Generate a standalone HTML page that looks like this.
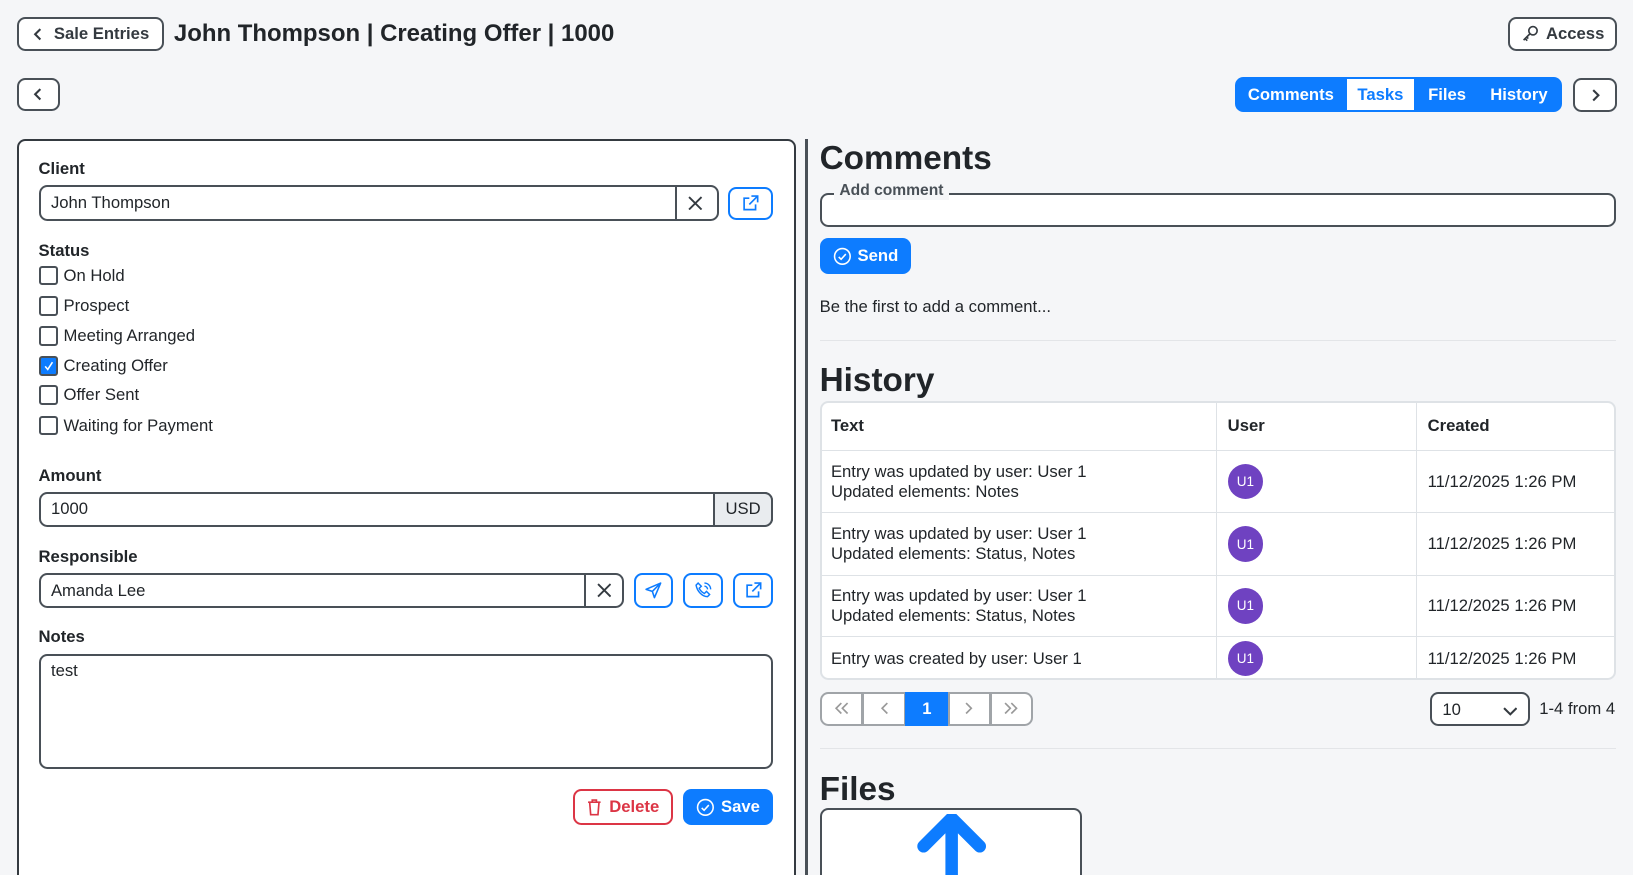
<!DOCTYPE html>
<html><head><meta charset="utf-8"><style>
html{zoom:1.04145;overflow:hidden;height:840px}
body{margin:0;width:1568px;height:840px;background:#f5f6f8;font-family:"Liberation Sans",sans-serif;color:#212529;position:relative;overflow:hidden;font-size:16px}
.a{position:absolute;box-sizing:border-box}
.btn{position:absolute;box-sizing:border-box;border:2px solid #495057;border-radius:8px;background:#fff;display:flex;align-items:center;justify-content:center;font-weight:bold;color:#343a40}
.bb{position:absolute;box-sizing:border-box;border:2px solid #0d7cff;border-radius:8px;background:#fff;display:flex;align-items:center;justify-content:center}
.lbl{position:absolute;font-weight:bold;font-size:16px}
.inp{position:absolute;box-sizing:border-box;border:2px solid #495057;border-radius:8px;background:#fff;padding-left:10px;display:flex;align-items:center}
.cb{position:absolute;left:37px;font-size:16px;display:flex;align-items:center}
.cb i{display:inline-block;width:19px;height:19px;border:2px solid #495057;border-radius:3px;margin-right:5px;box-sizing:border-box}
h2{position:absolute;margin:0;font-size:32px;font-weight:bold;left:787px}
td,th{border:1px solid #dee2e6;text-align:left;padding:0 10px;font-size:16px}
th{height:46px}
.av{width:34px;height:34px;border-radius:50%;background:#6f42c1;color:#fff;font-size:13px;display:flex;align-items:center;justify-content:center}
.pg{position:absolute;top:664px;height:33px;box-sizing:border-box;background:#fff;border:2px solid #a0a4a8;display:flex;align-items:center;justify-content:center;color:#999;font-size:18px}
</style></head><body>
<div class="btn" style="left:16px;top:16px;width:141px;height:33px;font-size:16px"><svg width="14" height="14" viewBox="0 0 14 14" style="margin-right:8px"><path d="M9 2L4 7l5 5" stroke="#343a40" stroke-width="2" fill="none"/></svg>Sale Entries</div>
<div class="a" style="left:167px;top:19px;font-size:23px;font-weight:bold">John Thompson | Creating Offer | 1000</div>
<div class="btn" style="left:1448px;top:16px;width:105px;height:33px"><svg width="18" height="18" viewBox="0 0 18 18" style="margin-right:6px"><circle cx="11.5" cy="6.5" r="4" stroke="#343a40" stroke-width="1.6" fill="none"/><path d="M8.5 9.5L2.5 15.5M4 14l2 2M5.5 12.5l1.5 1.5" stroke="#343a40" stroke-width="1.6" fill="none"/></svg>Access</div>
<div class="btn" style="left:16px;top:75px;width:42px;height:32px"><svg width="14" height="14"><path d="M9 2L4 7l5 5" stroke="#343a40" stroke-width="2" fill="none"/></svg></div>
<div class="a" style="left:1186px;top:74px;width:314px;height:34px;background:#0d7cff;border-radius:8px;color:#fff;font-weight:bold;display:flex;align-items:center">
<span style="width:107px;text-align:center">Comments</span><span style="width:65px;height:30px;background:#fff;color:#0d7cff;display:flex;align-items:center;justify-content:center">Tasks</span><span style="width:63px;text-align:center">Files</span><span style="width:75px;text-align:center">History</span></div>
<div class="btn" style="left:1510px;top:75px;width:43px;height:33px"><svg width="14" height="14"><path d="M5 2l5 5-5 5" stroke="#343a40" stroke-width="2" fill="none"/></svg></div>

<div class="a" style="left:16px;top:133px;width:748px;height:707px;background:#fff;border:2px solid #343a40;border-bottom:none;border-radius:8px 8px 0 0"></div>
<div class="a" style="left:773px;top:133px;width:3px;height:707px;background:#495057"></div>

<div class="lbl" style="left:37px;top:153px">Client</div>
<div class="inp" style="left:37px;top:178px;width:653px;height:34px">John Thompson</div>
<div class="a" style="left:648px;top:178px;width:2px;height:34px;background:#495057"></div>
<svg class="a" style="left:661px;top:188px" width="14" height="14"><path d="M1 1l12 12M13 1L1 13" stroke="#343a40" stroke-width="1.8"/></svg>
<div class="bb" style="left:699px;top:180px;width:43px;height:31px"><svg width="18" height="18" viewBox="0 0 18 18"><path d="M8 4H3v11h11v-5M10 2h6v6M16 2L8 10" stroke="#0d7cff" stroke-width="1.6" fill="none"/></svg></div>

<div class="lbl" style="left:37px;top:231px">Status</div>
<div class="cb" style="top:255px"><i></i>On Hold</div>
<div class="cb" style="top:284px"><i></i>Prospect</div>
<div class="cb" style="top:313px"><i></i>Meeting Arranged</div>
<div class="cb" style="top:342px"><i style="background:#0d7cff;border-color:#495057;position:relative"><svg width="15" height="15" style="position:absolute;left:0;top:0"><path d="M4 8l2.5 3 4.5-7" stroke="#fff" stroke-width="1.5" fill="none"/></svg></i>Creating Offer</div>
<div class="cb" style="top:370px"><i></i>Offer Sent</div>
<div class="cb" style="top:399px"><i></i>Waiting for Payment</div>

<div class="lbl" style="left:37px;top:447px">Amount</div>
<div class="inp" style="left:37px;top:472px;width:705px;height:34px">1000</div>
<div class="a" style="left:685px;top:472px;width:57px;height:34px;background:#e9ecef;border:2px solid #495057;border-radius:0 8px 8px 0;display:flex;align-items:center;justify-content:center">USD</div>

<div class="lbl" style="left:37px;top:525px">Responsible</div>
<div class="inp" style="left:37px;top:550px;width:562px;height:34px">Amanda Lee</div>
<div class="a" style="left:561px;top:550px;width:2px;height:34px;background:#495057"></div>
<svg class="a" style="left:573px;top:560px" width="14" height="14"><path d="M1 1l12 12M13 1L1 13" stroke="#343a40" stroke-width="1.8"/></svg>
<div class="bb" style="left:609px;top:550px;width:37px;height:34px"><svg width="18" height="18" viewBox="0 0 18 18"><path d="M16 2L2 8l6 2 2 6z M16 2L8 10" stroke="#0d7cff" stroke-width="1.5" fill="none" stroke-linejoin="round"/></svg></div>
<div class="bb" style="left:656px;top:550px;width:38px;height:34px"><svg width="18" height="18" viewBox="0 0 18 18"><path d="M4 2l3 3-2 2c1 2 3 4 5 5l2-2 3 3-2 2C8 15 3 10 2 4z" stroke="#0d7cff" stroke-width="1.4" fill="none"/><path d="M10 5a3 3 0 0 1 3 3M10 2a6 6 0 0 1 6 6" stroke="#0d7cff" stroke-width="1.3" fill="none"/></svg></div>
<div class="bb" style="left:704px;top:550px;width:38px;height:34px"><svg width="18" height="18" viewBox="0 0 18 18"><path d="M8 4H3v11h11v-5M10 2h6v6M16 2L8 10" stroke="#0d7cff" stroke-width="1.6" fill="none"/></svg></div>

<div class="lbl" style="left:37px;top:602px">Notes</div>
<div class="a" style="left:37px;top:628px;width:705px;height:110px;border:2px solid #495057;border-radius:8px;background:#fff;padding:5px 10px">test</div>

<div class="a" style="left:550px;top:758px;width:96px;height:34px;border:2px solid #dc3545;border-radius:8px;background:#fff;color:#dc3545;font-weight:bold;display:flex;align-items:center;justify-content:center"><svg width="16" height="18" viewBox="0 0 16 18" style="margin-right:6px"><path d="M2 4h12M6 4V2h4v2M3.5 4l1 12h7l1-12" stroke="#dc3545" stroke-width="1.6" fill="none"/></svg>Delete</div>
<div class="a" style="left:656px;top:758px;width:86px;height:34px;border-radius:8px;background:#0d7cff;color:#fff;font-weight:bold;display:flex;align-items:center;justify-content:center"><svg width="18" height="18" viewBox="0 0 18 18" style="margin-right:6px"><circle cx="9" cy="9" r="7.5" stroke="#fff" stroke-width="1.5" fill="none"/><path d="M5.5 9.5l2.3 2.3 4.5-5" stroke="#fff" stroke-width="1.5" fill="none"/></svg>Save</div>

<h2 style="top:134px">Comments</h2>
<div class="a" style="left:787px;top:185px;width:765px;height:33px;border:2px solid #495057;border-radius:8px;background:#fff"></div>
<div class="a" style="left:801px;top:175px;padding:0 5px;background:#f5f6f8;font-weight:bold;color:#495057;font-size:15px">Add comment</div>
<div class="a" style="left:787px;top:229px;width:88px;height:34px;border-radius:8px;background:#0d7cff;color:#fff;font-weight:bold;display:flex;align-items:center;justify-content:center"><svg width="18" height="18" viewBox="0 0 18 18" style="margin-right:6px"><circle cx="9" cy="9" r="7.5" stroke="#fff" stroke-width="1.5" fill="none"/><path d="M5.5 9.5l2.3 2.3 4.5-5" stroke="#fff" stroke-width="1.5" fill="none"/></svg>Send</div>
<div class="a" style="left:787px;top:285px">Be the first to add a comment...</div>
<div class="a" style="left:787px;top:326px;width:765px;height:1px;background:#e3e5e8"></div>

<h2 style="top:348px">History</h2>
<div class="a" style="left:787px;top:385px;width:765px;height:268px;border:2px solid #dee2e6;border-radius:8px;overflow:hidden;background:#fff">
<table style="border-collapse:collapse;width:765px;margin:-2px">
<tr><th style="width:360px">Text</th><th style="width:171px">User</th><th>Created</th></tr>
<tr style="height:60px"><td>Entry was updated by user: User 1<br>Updated elements: Notes</td><td><div class="av">U1</div></td><td>11/12/2025 1:26 PM</td></tr>
<tr style="height:60px"><td>Entry was updated by user: User 1<br>Updated elements: Status, Notes</td><td><div class="av">U1</div></td><td>11/12/2025 1:26 PM</td></tr>
<tr style="height:59px"><td>Entry was updated by user: User 1<br>Updated elements: Status, Notes</td><td><div class="av">U1</div></td><td>11/12/2025 1:26 PM</td></tr>
<tr style="height:42px"><td>Entry was created by user: User 1</td><td><div class="av">U1</div></td><td>11/12/2025 1:26 PM</td></tr>
</table></div>

<div class="pg" style="left:787px;width:42px;border-radius:8px 0 0 8px"><svg width="16" height="14"><path d="M8 2L3 7l5 5M14 2L9 7l5 5" stroke="#999" stroke-width="1.6" fill="none"/></svg></div>
<div class="pg" style="left:828px;width:42px"><svg width="10" height="14"><path d="M8 2L3 7l5 5" stroke="#999" stroke-width="1.6" fill="none"/></svg></div>
<div class="pg" style="left:869px;width:42px;background:#0d7cff;border-color:#0d7cff;color:#fff;font-weight:bold;font-size:16px">1</div>
<div class="pg" style="left:910px;width:42px"><svg width="10" height="14"><path d="M2 2l5 5-5 5" stroke="#999" stroke-width="1.6" fill="none"/></svg></div>
<div class="pg" style="left:951px;width:41px;border-radius:0 8px 8px 0"><svg width="16" height="14"><path d="M2 2l5 5-5 5M8 2l5 5-5 5" stroke="#999" stroke-width="1.6" fill="none"/></svg></div>
<div class="a" style="left:1373px;top:664px;width:96px;height:33px;border:2px solid #495057;border-radius:8px;background:#fff;padding:6px 10px">10<svg width="14" height="10" style="position:absolute;right:10px;top:12px"><path d="M1 2l6 6 6-6" stroke="#343a40" stroke-width="2" fill="none"/></svg></div>
<div class="a" style="left:1478px;top:671px">1-4 from 4</div>
<div class="a" style="left:787px;top:718px;width:765px;height:1px;background:#e3e5e8"></div>

<h2 style="top:740px">Files</h2>
<div class="a" style="left:787px;top:776px;width:252px;height:64px;border:2px solid #495057;border-bottom:none;border-radius:8px 8px 0 0;background:#fff;overflow:hidden"><svg width="80" height="70" style="position:absolute;left:85px;top:4px" viewBox="0 0 80 70"><path d="M40 6v70M13 31L40 4l27 27" stroke="#0d7cff" stroke-width="12" stroke-linecap="round" stroke-linejoin="round" fill="none"/></svg></div>
</body></html>
